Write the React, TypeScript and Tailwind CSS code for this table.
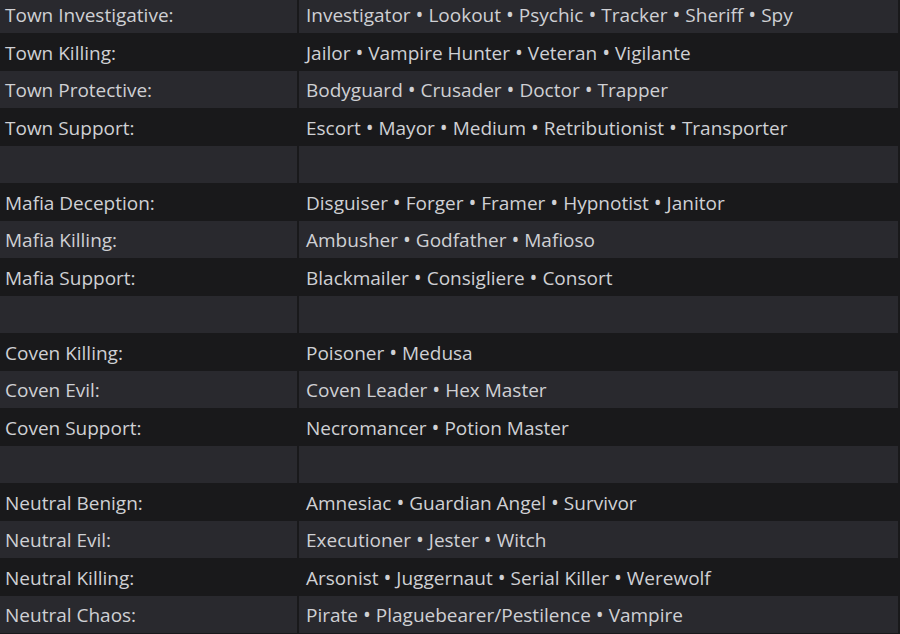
import React from "react";

const rows: [string, string[]][] = [
  ["Town Investigative:", ["Investigator", "Lookout", "Psychic", "Tracker", "Sheriff", "Spy"]],
  ["Town Killing:", ["Jailor", "Vampire Hunter", "Veteran", "Vigilante"]],
  ["Town Protective:", ["Bodyguard", "Crusader", "Doctor", "Trapper"]],
  ["Town Support:", ["Escort", "Mayor", "Medium", "Retributionist", "Transporter"]],
  ["", []],
  ["Mafia Deception:", ["Disguiser", "Forger", "Framer", "Hypnotist", "Janitor"]],
  ["Mafia Killing:", ["Ambusher", "Godfather", "Mafioso"]],
  ["Mafia Support:", ["Blackmailer", "Consigliere", "Consort"]],
  ["", []],
  ["Coven Killing:", ["Poisoner", "Medusa"]],
  ["Coven Evil:", ["Coven Leader", "Hex Master"]],
  ["Coven Support:", ["Necromancer", "Potion Master"]],
  ["", []],
  ["Neutral Benign:", ["Amnesiac", "Guardian Angel", "Survivor"]],
  ["Neutral Evil:", ["Executioner", "Jester", "Witch"]],
  ["Neutral Killing:", ["Arsonist", "Juggernaut", "Serial Killer", "Werewolf"]],
  ["Neutral Chaos:", ["Pirate", "Plaguebearer/Pestilence", "Vampire"]],
];

export default function App() {
  return (
    <div
      className="w-[900px] h-[634px] overflow-hidden bg-[#19191b] text-[#cfd0d4] text-[19px] leading-[19px]"
      style={{ fontFamily: '"Open Sans", "Noto Sans", sans-serif' }}
    >
      <div className="flex flex-col pr-[2px] -mt-[4.5px]">
        {rows.map(([label, roles], i) => {
          const odd = i % 2 === 0;
          return (
            <div key={i} className="flex h-[37.5px] gap-[2px]">
              <div
                className={`w-[297px] flex items-center pl-[5px] pt-[3px] ${odd ? "bg-[#29292e]" : ""}`}
              >
                <span>{label}</span>
              </div>
              <div className={`flex-1 flex items-center pl-[7px] pt-[3px] ${odd ? "bg-[#29292e]" : ""}`}>
                <span className="whitespace-pre">
                  {roles.map((r, j) => (
                    <React.Fragment key={j}>
                      {j > 0 && (
                        <>
                          {" "}
                          <span className="text-[21px] leading-[0px]">•</span>{" "}
                        </>
                      )}
                      {r}
                    </React.Fragment>
                  ))}
                </span>
              </div>
            </div>
          );
        })}
      </div>
    </div>
  );
}
